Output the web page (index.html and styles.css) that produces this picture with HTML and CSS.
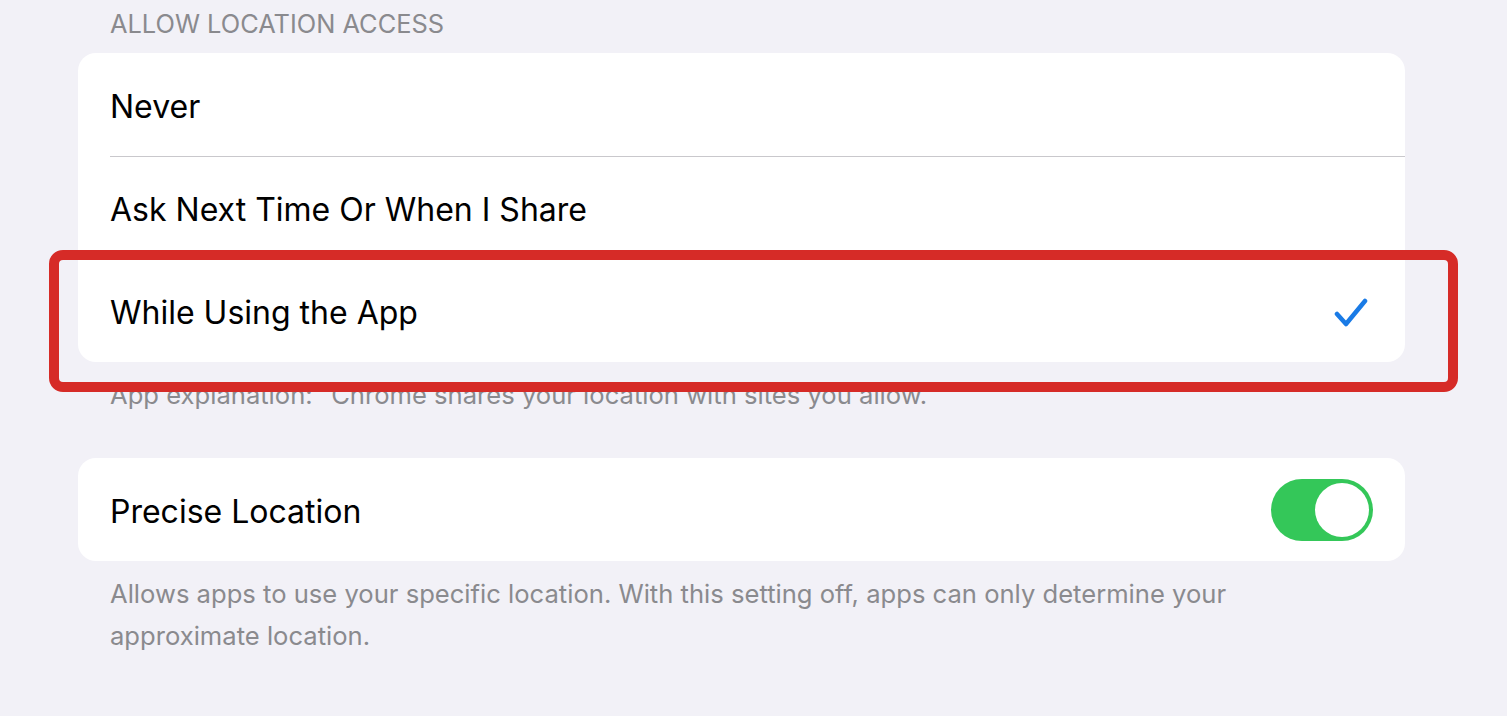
FILE: index.html
```html
<!DOCTYPE html>
<html>
<head>
<meta charset="utf-8">
<link rel="stylesheet" href="styles.css">
</head>
<body>
<div class="page">
  <div class="section-header">ALLOW LOCATION ACCESS</div>
  <div class="group">
    <div class="row"><span class="label">Never</span></div>
    <div class="row"><span class="label">Ask Next Time Or When I Share</span></div>
    <div class="row"><span class="label">While Using the App</span>
      <svg class="check" width="34" height="32" viewBox="0 0 34 32"><path d="M3 17 L12 27 L31 4" fill="none" stroke="#1a7be6" stroke-width="4.5" stroke-linecap="round" stroke-linejoin="round"/></svg>
    </div>
    <div class="highlight"></div>
  </div>
  <div class="footer first">App explanation: “Chrome shares your location with sites you allow.”</div>
  <div class="group">
    <div class="row"><span class="label">Precise Location</span>
      <div class="toggle"><div class="knob"></div></div>
    </div>
  </div>
  <div class="footer">Allows apps to use your specific location. With this setting off, apps can only determine your approximate location.</div>
</div>
</body>
</html>
```

FILE: styles.css
```css
html, body {
  margin: 0;
  padding: 0;
  background: #f2f1f7;
  font-family: Inter, "Noto Sans", sans-serif;
}
.page {
  width: 1327px;
  margin-left: 78px;
}
.section-header {
  height: 53px;
  box-sizing: border-box;
  padding: 8px 0 0 32px;
  font-size: 25.4px;
  line-height: 32px;
  color: #8a8a8e;
}
.group {
  position: relative;
  background: #fff;
  border-radius: 18px;
}
.row {
  height: 103px;
  margin-left: 32px;
  padding: 3px 32px 0 0;
  display: flex;
  align-items: center;
  justify-content: space-between;
  box-sizing: border-box;
}
.row + .row {
  border-top: 1.5px solid #c9c8cc;
}
.label {
  font-size: 32px;
  color: #000;
}
.check {
  margin-right: 5px;
}
.highlight {
  position: absolute;
  left: -29px;
  right: -53px;
  top: 197px;
  height: 142px;
  box-sizing: border-box;
  border: 10px solid #d62b27;
  border-radius: 14px;
  pointer-events: none;
}
.footer {
  padding: 12px 80px 0 32px;
  font-size: 25.6px;
  line-height: 42px;
  color: #8a8a8e;
}
.footer.first {
  height: 96px;
  box-sizing: border-box;
}
.toggle {
  width: 102px;
  height: 62px;
  border-radius: 31px;
  background: #34c759;
  position: relative;
  margin-top: -3px;
}
.knob {
  position: absolute;
  right: 4px;
  top: 4px;
  width: 54px;
  height: 54px;
  border-radius: 50%;
  background: #fff;
}
```
